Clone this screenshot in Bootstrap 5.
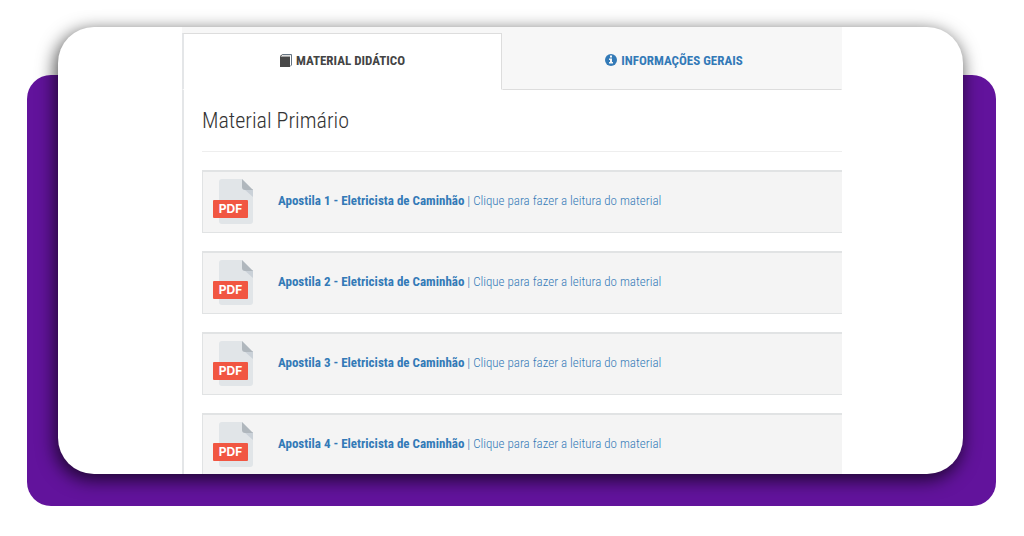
<!DOCTYPE html>
<html lang="pt-BR">
<head>
<meta charset="utf-8">
<meta name="viewport" content="width=device-width, initial-scale=1">
<title>Material Didático</title>
<link href="https://cdn.jsdelivr.net/npm/bootstrap@5.3.0/dist/css/bootstrap.min.css" rel="stylesheet">
<style>
body { background: #fff; font-family: "Roboto Condensed", "Liberation Sans Narrow", Roboto, sans-serif; font-size: 14px; line-height: 20px; color: #333; }
.stage { padding: 75px 28px 30px 27px; }
.backdrop { display: flow-root; background: #62139c; border-radius: 24px; padding: 0 33px 32px 31px; }
.sheet { background: #fff; border-radius: 36px; margin-top: -48px; padding: 0 121px 0 124px; box-shadow: -2px 5px 18px 1px rgba(0,0,0,.7); }
.course-tabs { background: #f7f7f7; padding-top: 6px; }
.course-tabs .nav-link { height: 57px; padding: 0 0 2px; font-weight: 700; font-size: 13px; color: #337ab7; background: transparent; border: 1px solid transparent; border-bottom-color: #ddd; border-radius: 0; }
.course-tabs .nav-link.active { background: #fff; color: #444; border-color: #ddd #ddd transparent; border-left: 2px solid #e4e6e8; }
.tab-first { flex: 16 1 0; }
.tab-second { flex: 17 1 0; }
.tab-second .nav-link { padding-left: 4px; }
.course-panel { border-left: 2px solid #e4e6e8; padding: 18px 0 0 18px; }
.course-panel h1 { font-size: 22px; line-height: 26px; font-weight: 300; padding-bottom: 17px; margin-bottom: 18px; border-bottom: 1px solid #eee; color: #333; }
.lesson-list { gap: 18px; }
.lesson { background: #f4f4f4; border: 1px solid #e1e3e4; border-top-width: 2px; border-right: 0; height: 63px; padding: 0 10px; gap: 24px; color: #337ab7; font-size: 13px; }
.lesson-list li:last-child .lesson { border-bottom: 0; height: 61px; }
.lesson span { font-weight: 300; padding-bottom: 2px; }
.lesson strong { font-weight: 700; }
.pdf-label { font: 700 12px Inter, sans-serif; }
</style>
</head>
<body>
<main class="stage">
  <div class="backdrop">
    <section class="sheet">
      <ul class="nav course-tabs flex-nowrap" role="tablist">
        <li class="nav-item tab-first" role="presentation">
          <button class="nav-link active w-100 d-flex align-items-center justify-content-center gap-1 text-nowrap" type="button" role="tab" aria-selected="true">
            <svg width="12" height="14" viewBox="0 0 12 14" aria-hidden="true"><path d="M2.500 .5h9v10.500L10 12.500" fill="none" stroke="#667583"/><path d="M0 2.500h10V13H0z" fill="#484848"/><path d="M0 2.500 2.500.500" stroke="#484848"/><path d="M1.500 2 3 1h8L10 2z" fill="#ddd"/></svg>MATERIAL DIDÁTICO
          </button>
        </li>
        <li class="nav-item tab-second" role="presentation">
          <button class="nav-link w-100 d-flex align-items-center justify-content-center gap-1 text-nowrap" type="button" role="tab" aria-selected="false">
            <svg width="12" height="14" viewBox="0 0 12 14" aria-hidden="true"><circle cx="6" cy="6" r="6" fill="#337ab7"/><path d="M5 1.500h2v2H5zM4 4.500h3V8h1v1.500H4V8h1V6H4z" fill="#f7f7f7"/></svg>INFORMAÇÕES GERAIS
          </button>
        </li>
      </ul>
      <div class="course-panel">
        <h1>Material Primário</h1>
        <svg class="d-none" aria-hidden="true">
          <symbol id="pdf" viewBox="0 0 41 46">
            <path d="M9 0h20l11 11v31a3 3 0 0 1-3 3H9a3 3 0 0 1-3-3V3a3 3 0 0 1 3-3z" fill="#e1e5e8"/>
            <path d="M31 10l9 8v-8z" fill="#cad1d8"/>
            <path d="M29 0l11 11h-8a3 3 0 0 1-3-3z" fill="#b0b7bd"/>
            <rect y="21" width="35" height="18" rx="1" fill="#f15642"/>
            <text x="17.500" y="34" text-anchor="middle" fill="#fff" class="pdf-label">PDF</text>
          </symbol>
        </svg>
        <ul class="lesson-list list-unstyled mb-0 d-grid">
          <li><a href="#" class="lesson d-flex align-items-center text-decoration-none"><svg width="41" height="46" role="img" aria-label="PDF"><use href="#pdf"/></svg><span><strong>Apostila 1 - Eletricista de Caminhão</strong> | Clique para fazer a leitura do material</span></a></li>
          <li><a href="#" class="lesson d-flex align-items-center text-decoration-none"><svg width="41" height="46" role="img" aria-label="PDF"><use href="#pdf"/></svg><span><strong>Apostila 2 - Eletricista de Caminhão</strong> | Clique para fazer a leitura do material</span></a></li>
          <li><a href="#" class="lesson d-flex align-items-center text-decoration-none"><svg width="41" height="46" role="img" aria-label="PDF"><use href="#pdf"/></svg><span><strong>Apostila 3 - Eletricista de Caminhão</strong> | Clique para fazer a leitura do material</span></a></li>
          <li><a href="#" class="lesson d-flex align-items-center text-decoration-none"><svg width="41" height="46" role="img" aria-label="PDF"><use href="#pdf"/></svg><span><strong>Apostila 4 - Eletricista de Caminhão</strong> | Clique para fazer a leitura do material</span></a></li>
        </ul>
      </div>
    </section>
  </div>
</main>
<script src="https://cdn.jsdelivr.net/npm/bootstrap@5.3.0/dist/js/bootstrap.bundle.min.js"></script>
</body>
</html>
